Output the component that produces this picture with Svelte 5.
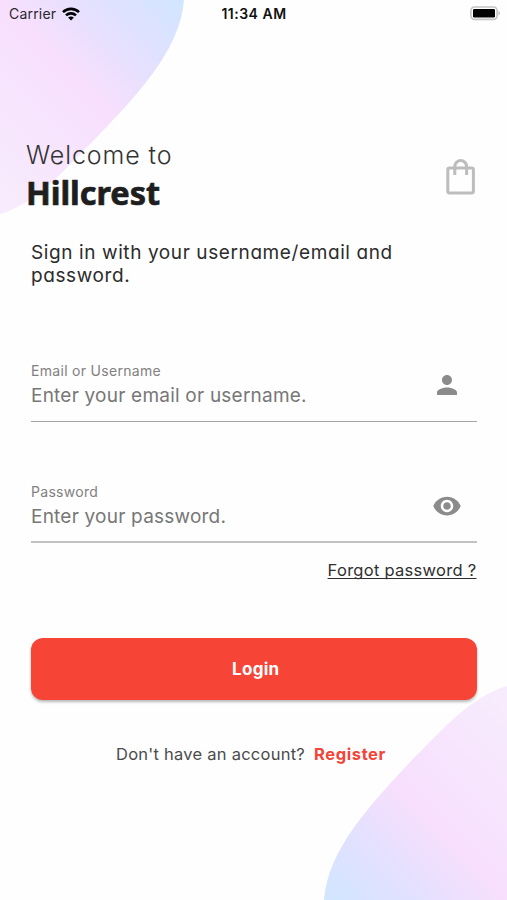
<script>
  let username = $state('')
  let password = $state('')
  let visible = $state(false)

  function login(e) {
    e.preventDefault()
  }
</script>

<main class="screen">
  <svg class="blobs" viewBox="0 0 507 900" aria-hidden="true">
    <defs>
      <linearGradient id="top" gradientUnits="userSpaceOnUse" x1="190" y1="0" x2="0" y2="190">
        <stop offset="0" stop-color="#d0e6ff" />
        <stop offset="0.25" stop-color="#e1e1ff" />
        <stop offset="0.5" stop-color="#f7dffd" />
        <stop offset="1" stop-color="#f7ebfd" />
      </linearGradient>
      <linearGradient id="bottom" gradientUnits="userSpaceOnUse" x1="318" y1="900" x2="508" y2="710">
        <stop offset="0" stop-color="#d0e6ff" />
        <stop offset="0.25" stop-color="#e1e1ff" />
        <stop offset="0.5" stop-color="#f7dffd" />
        <stop offset="1" stop-color="#f7ebfd" />
      </linearGradient>
    </defs>
    <path fill="url(#top)" d="M0 0H184C180 52 134 98 96 138C61 173 37 203 0 214Z" />
    <path fill="url(#bottom)" d="M507 900H324C328 848 373 802 411 761C446 726 471 697 507 686Z" />
  </svg>

  <header class="status">
    <span class="carrier">
      Carrier
      <svg width="18" height="14" viewBox="0 0 18 14" aria-hidden="true">
        <g fill="none" stroke="#000" stroke-width="2.6">
          <path d="M1 5.1C5.5 .8 12.5 .8 17 5.1" />
          <path d="M4 8.4C6.8 5.7 11.2 5.7 14 8.4" />
        </g>
        <path d="M6.1 10.6Q9 8.2 11.9 10.6L9 13.6Z" />
      </svg>
    </span>
    <span class="time">11:34 AM</span>
    <svg class="battery" width="31" height="15" viewBox="0 0 31 15" aria-hidden="true">
      <rect x=".9" y="1" width="26.2" height="12.4" rx="3.6" fill="#fff" stroke="#c4c4c4" stroke-width="1.6" />
      <rect x="3" y="3" width="22" height="8.6" rx="1.3" />
      <path d="M28.6 5Q31 7.2 28.6 9.4Z" fill="#aaa" />
    </svg>
  </header>

  <div class="title">
    <h1><span class="welcome">Welcome to</span><span class="brand">Hillcrest</span></h1>
    <svg width="36" height="42" viewBox="0 0 36 42" fill="none" stroke="#bdbdbd" stroke-width="3" aria-hidden="true">
      <rect x="4.8" y="12.1" width="25.6" height="24.8" rx="1.6" />
      <path d="M11.8 19V10.5a5.9 5.9 0 0 1 11.8 0V19" />
    </svg>
  </div>

  <p class="intro">Sign in with your username/email and<br />password.</p>

  <form onsubmit={login}>
    <div class="field">
      <div class="entry">
        <label for="username">Email or Username</label>
        <input id="username" bind:value={username} placeholder="Enter your email or username." />
      </div>
      <svg width="30" height="30" viewBox="0 0 24 24" fill="#8b8b8b" aria-hidden="true">
        <path d="M12 12c2.21 0 4-1.79 4-4s-1.79-4-4-4-4 1.79-4 4 1.79 4 4 4zm0 2c-2.67 0-8 1.34-8 4v2h16v-2c0-2.66-5.33-4-8-4z" />
      </svg>
    </div>

    <div class="field second">
      <div class="entry">
        <label for="password">Password</label>
        <input id="password" type={visible ? 'text' : 'password'} bind:value={password} placeholder="Enter your password." />
      </div>
      <button class="eye" type="button" aria-label="Show password" onclick={() => (visible = !visible)}>
        <svg width="30" height="30" viewBox="0 0 24 24" fill="#8b8b8b">
          <path d="M12 4.5C7 4.5 2.73 7.61 1 12c1.73 4.39 6 7.5 11 7.5s9.27-3.11 11-7.5c-1.73-4.39-6-7.5-11-7.5zM12 17c-2.76 0-5-2.24-5-5s2.24-5 5-5 5 2.24 5 5-2.24 5-5 5zm0-8c-1.66 0-3 1.34-3 3s1.34 3 3 3 3-1.34 3-3-1.34-3-3-3z" />
        </svg>
      </button>
    </div>

    <a class="forgot" href="#forgot">Forgot password ?</a>
    <button class="login" type="submit">Login</button>
  </form>

  <p class="signup"><span>Don't have an account?</span><a href="#register">Register</a></p>
</main>

<style>
  :global(body) { background: #fefefe; }
  .screen { position: relative; box-sizing: border-box; width: 507px; height: 900px; overflow: hidden; display: flex; flex-direction: column; font-family: Inter, "Liberation Sans", sans-serif; color: #222; }
  .blobs { position: absolute; inset: 0; width: 507px; height: 900px; z-index: -1; }
  .status { display: grid; grid-template-columns: 1fr auto 1fr; align-items: center; height: 27px; padding: 0 6px 0 9px; box-sizing: border-box; font-size: 14px; color: #111; }
  .carrier { display: flex; align-items: center; gap: 6px; letter-spacing: 0.2px; color: #2b2630; }
  .time { margin-left: -2px; font-weight: 600; letter-spacing: 0.5px; }
  .battery { justify-self: end; }
  .title { display: flex; justify-content: space-between; align-items: flex-start; margin: 113px 28px 0 26px; height: 76px; }
  .title svg { margin-top: 16px; }
  h1 { margin: 0; display: flex; flex-direction: column; font-weight: 400; }
  .welcome { font-weight: 300; font-size: 25px; line-height: 30px; letter-spacing: 0.9px; color: #333; }
  .brand { font-family: "Noto Sans", "Open Sans", sans-serif; font-weight: 700; font-size: 32.5px; line-height: 46px; letter-spacing: -0.05px; color: #1e1e1e; -webkit-text-stroke: 0.7px #1e1e1e; }
  .intro { margin: 25px 31px 0; height: 46px; font-size: 19px; line-height: 23px; letter-spacing: 0.6px; font-feature-settings: "cv11"; white-space: nowrap; color: #2c2c2c; }
  form { display: flex; flex-direction: column; margin: 71px 30.5px 0 31px; }
  .field { display: flex; justify-content: space-between; box-sizing: border-box; height: 64px; border-bottom: 1.5px solid #a5a5a5; padding-right: 14.5px; }
  .field > svg, .eye { margin-top: 12px; }
  .second { margin-top: 57px; border-bottom: 2px solid #bfc2bf; }
  .entry { display: flex; flex-direction: column; flex: 1; }
  label { font-size: 14px; line-height: 20px; margin-top: 3px; letter-spacing: 0.3px; color: #818181; }
  input { border: 0; padding: 0; margin: 0; height: 28px; background: none; outline: 0; font: inherit; font-size: 19px; letter-spacing: 0.22px; color: #222; }
  input::placeholder { color: #777; opacity: 1; }
  .eye { border: 0; padding: 0; width: 30px; height: 30px; background: none; }
  .forgot { align-self: flex-end; margin-top: 15px; line-height: 24px; font-size: 16.5px; letter-spacing: 0.28px; color: #303030; text-decoration: underline; text-underline-offset: 2px; text-decoration-skip-ink: none; text-decoration-thickness: 1px; }
  .login { margin-top: 55.5px; height: 62px; border: 0; border-radius: 12px; background: #f64436; color: #fff; font: inherit; font-size: 17px; font-weight: 700; letter-spacing: 0.3px; padding: 0 0 0 4px; box-shadow: 0 2px 3px rgba(0, 0, 0, 0.28); }
  .signup { display: flex; gap: 9px; margin: 42px 0 0 116px; line-height: 24px; font-size: 16.5px; letter-spacing: 0.25px; color: #4b4b4b; }
  .signup a { color: #f24438; font-weight: 700; letter-spacing: 0.6px; text-decoration: none; }
</style>
